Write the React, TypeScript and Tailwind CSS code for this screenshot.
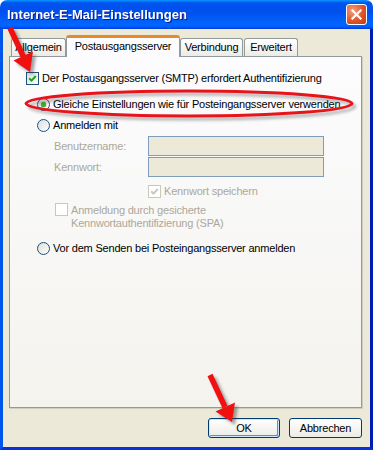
import React from "react"

function CheckBox({ checked = false, disabled = false }: { checked?: boolean; disabled?: boolean }) {
  return (
    <div
      className={
        disabled
          ? "w-[13px] h-[13px] shrink-0 border border-[#CAC8BB] bg-white flex items-center justify-center"
          : "w-[13px] h-[13px] shrink-0 border border-[#1C5180] bg-[linear-gradient(135deg,#DCDCD7,#FFFFFF)] flex items-center justify-center"
      }
    >
      {checked && (
        <svg width="11" height="11" viewBox="0 0 11 11">
          <path
            d="M2.2 5.2 L4.5 7.6 L8.8 3"
            fill="none"
            stroke={disabled ? "#CAC8BB" : "#21A121"}
            strokeWidth="2"
          />
        </svg>
      )}
    </div>
  )
}

function Radio({ checked = false }: { checked?: boolean }) {
  return (
    <div className="w-[13px] h-[13px] shrink-0 rounded-full border border-[#1C5180] bg-[linear-gradient(135deg,#DCDCD7,#FFFFFF)] flex items-center justify-center">
      {checked && <div className="w-[5px] h-[5px] rounded-full bg-[#3DAE2F] shadow-[0_0_1px_#1E8F1E]" />}
    </div>
  )
}

function Tab({ label, active = false, width }: { label: string; active?: boolean; width: string }) {
  if (active) {
    return (
      <div
        className={`${width} h-[22px] -mb-px relative z-10 border-x border-[#919B9C] border-t-[3px] border-t-[#E68B2C] rounded-t-[3px] bg-[#FCFCFE] flex items-center justify-center pb-[2px]`}
      >
        {label}
      </div>
    )
  }
  return (
    <div
      className={`${width} h-[18px] border border-b-0 border-[#919B9C] rounded-t-[3px] bg-[linear-gradient(180deg,#FFFFFF,#ECEBE6)] flex items-center justify-center`}
    >
      {label}
    </div>
  )
}

export default function App() {
  return (
    <div className="w-[373px] h-[450px] relative flex flex-col overflow-hidden bg-white text-[11px] tracking-[-0.2px] text-black font-['Liberation_Sans',Arial,sans-serif] leading-[13px]">
      {/* Title bar */}
      <div className="h-[29px] shrink-0 rounded-t-[7px] bg-[linear-gradient(180deg,#0997FF_0%,#0053EE_10%,#0050EE_40%,#0066FF_85%,#005BFF_92%,#003DD7_100%)] flex items-center justify-between pl-[7px] pr-[6px]">
        <span className="text-white font-bold text-[13px] tracking-normal drop-shadow-[1px_1px_0_#0A1F8F]">
          Internet-E-Mail-Einstellungen
        </span>
        <div className="w-[21px] h-[21px] rounded-[3px] border border-white bg-[radial-gradient(circle_at_30%_30%,#F0A07F,#E0542C_55%,#C43A12)] flex items-center justify-center">
          <svg width="13" height="13" viewBox="0 0 13 13">
            <path d="M2.5 2.5 L10.5 10.5 M10.5 2.5 L2.5 10.5" stroke="white" strokeWidth="2.2" strokeLinecap="square" />
          </svg>
        </div>
      </div>

      {/* Body */}
      <div className="flex-1 flex flex-col bg-[#ECE9D8] border-l-[3px] border-l-[#0055EA] border-r-[3px] border-r-[#001DB8] border-b-[3px] border-b-[#0831D9] pl-[6px] pr-[8px] pt-[6px] pb-[9px]">
        {/* Tabs */}
        <div className="h-[21px] flex items-end pl-[2px]">
          <Tab label="Allgemein" width="w-[55px]" />
          <Tab label="Postausgangsserver" active width="w-[114px]" />
          <Tab label="Verbindung" width="w-[63px]" />
          <div className="w-px" />
          <Tab label="Erweitert" width="w-[54px]" />
        </div>

        {/* Panel */}
        <div className="h-[352px] border border-[#919B9C] shadow-[1px_1px_0_#D0CEBF] bg-[linear-gradient(180deg,#FCFCFE,#F4F3EE)] flex flex-col">
          <div className="mt-[15px] ml-[16px] h-[13px] flex items-center gap-[3px]">
            <CheckBox checked />
            <span>Der Postausgangsserver (SMTP) erfordert Authentifizierung</span>
          </div>
          <div className="mt-[13px] ml-[27px] h-[13px] flex items-center gap-[3px]">
            <Radio checked />
            <span>Gleiche Einstellungen wie für Posteingangsserver verwenden</span>
          </div>
          <div className="mt-[8px] ml-[27px] h-[13px] flex items-center gap-[3px]">
            <Radio />
            <span>Anmelden mit</span>
          </div>
          <div className="mt-[4px] ml-[44px] h-[20px] flex items-center text-[#ACA899]">
            <span className="w-[94px]">Benutzername:</span>
            <div className="w-[176px] h-[20px] border border-[#7F9DB9] bg-[#ECE9D8]" />
          </div>
          <div className="mt-[1px] ml-[44px] h-[20px] flex items-center text-[#ACA899]">
            <span className="w-[94px]">Kennwort:</span>
            <div className="w-[176px] h-[20px] border border-[#7F9DB9] bg-[#ECE9D8]" />
          </div>
          <div className="mt-[8px] ml-[138px] h-[13px] flex items-center gap-[3px] text-[#ACA899]">
            <CheckBox checked disabled />
            <span>Kennwort speichern</span>
          </div>
          <div className="mt-[5px] ml-[45px] flex items-start gap-[3px] text-[#ACA899]">
            <CheckBox disabled />
            <span className="pt-px">
              Anmeldung durch gesicherte
              <br />
              Kennwortauthentifizierung (SPA)
            </span>
          </div>
          <div className="mt-[12px] ml-[27px] h-[13px] flex items-center gap-[3px]">
            <Radio />
            <span>Vor dem Senden bei Posteingangsserver anmelden</span>
          </div>
        </div>

        {/* Buttons */}
        <div className="mt-[10px] flex justify-end gap-[9px]">
          <button className="w-[72px] h-[20px] rounded-[3px] border border-[#003C74] bg-[linear-gradient(180deg,#FFFFFF,#ECEBE6)] shadow-[inset_0_0_0_1px_#CEE7FF,inset_-1px_-1px_0_1px_#6982EE] leading-none">
            OK
          </button>
          <button className="w-[73px] h-[20px] rounded-[3px] border border-[#003C74] bg-[linear-gradient(180deg,#FFFFFF,#ECEBE6)] leading-none">
            Abbrechen
          </button>
        </div>
      </div>

      {/* Annotations */}
      <svg className="absolute inset-0 pointer-events-none" width="373" height="450" viewBox="0 0 373 450">
        <defs>
          <filter id="sh" x="-20%" y="-20%" width="140%" height="140%">
            <feGaussianBlur stdDeviation="1.5" />
          </filter>
        </defs>
        {/* shadows */}
        <g filter="url(#sh)" opacity="0.45" transform="translate(3 3)">
          <ellipse cx="189" cy="103.5" rx="163" ry="12.5" fill="none" stroke="#555" strokeWidth="3" />
          <path d="M10 28 L24 58" stroke="#333" strokeWidth="5.5" />
          <path d="M30 72 L33 51.5 L13.5 60.5 Z" fill="#333" />
          <path d="M210 375 L225 407" stroke="#333" strokeWidth="5.5" />
          <path d="M232 422 L235 402.5 L215.5 411.5 Z" fill="#333" />
        </g>
        <ellipse cx="189" cy="103.5" rx="163" ry="12.5" fill="none" stroke="#E8141C" strokeWidth="3" />
        <path d="M10 28 L24 58" stroke="#F01010" strokeWidth="5.5" />
        <path d="M30 72 L33 51.5 L13.5 60.5 Z" fill="#F01010" />
        <path d="M210 375 L225 407" stroke="#F01010" strokeWidth="5.5" />
        <path d="M232 422 L235 402.5 L215.5 411.5 Z" fill="#F01010" />
      </svg>
    </div>
  )
}
